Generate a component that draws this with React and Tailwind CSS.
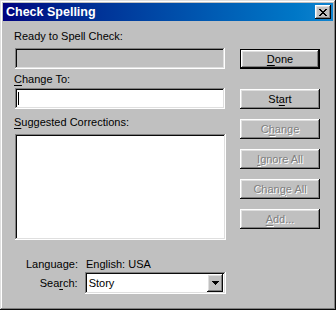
import React from "react";

const raised = "shadow-[inset_-1px_-1px_#0a0a0a,inset_1px_1px_#ffffff,inset_-2px_-2px_#808080,inset_2px_2px_#dfdfdf]";
const sunken = "shadow-[inset_-1px_-1px_#ffffff,inset_1px_1px_#808080,inset_-2px_-2px_#dfdfdf,inset_2px_2px_#0a0a0a]";
const disabledText = "text-[#808080] [text-shadow:1px_1px_0_#ffffff]";

const Btn = ({ children, disabled, isDefault, className = "" }) => {
  const inner = (
    <div className={`flex h-full w-full items-center justify-center bg-[#c0c0c0] ${raised} ${disabled ? disabledText : "text-black"}`}>
      {children}
    </div>
  );
  if (isDefault) {
    return <div className={`h-[20px] w-[80px] border border-black ${className}`}>{inner}</div>;
  }
  return <div className={`h-[20px] w-[80px] ${className}`}>{inner}</div>;
};

const U = ({ children }) => <span className="underline underline-offset-[2px]">{children}</span>;

export default function App() {
  return (
    <div className="h-[310px] w-[336px] bg-[#c0c0c0] p-[3px] text-[11px] leading-[13px] text-black shadow-[inset_-1px_-1px_#0a0a0a,inset_1px_1px_#dfdfdf,inset_-2px_-2px_#808080,inset_2px_2px_#ffffff] [font-family:'Liberation_Sans',Arial,sans-serif]">
      <div className="flex h-[18px] items-center justify-between bg-gradient-to-r from-[#000080] to-[#1084d0] pl-[3px] pr-[2px]">
        <span className="text-[12.5px] font-bold text-white">Check Spelling</span>
        <div className={`flex h-[14px] w-[16px] items-center justify-center bg-[#c0c0c0] ${raised}`}>
          <svg width="8" height="7" viewBox="0 0 8 7" shapeRendering="crispEdges">
            <path d="M0 0h2v1h-2zM6 0h2v1h-2zM1 1h2v1h-2zM5 1h2v1h-2zM2 2h4v1h-4zM3 3h2v1h-2zM2 4h4v1h-4zM1 5h2v1h-2zM5 5h2v1h-2zM0 6h2v1h-2zM6 6h2v1h-2z" fill="#000" />
          </svg>
        </div>
      </div>

      <div className="flex">
        <div className="ml-[11px] flex w-[212px] flex-col">
          <div className="mt-[9px] h-[13px]">Ready to Spell Check:</div>
          <div className={`ml-[1px] mt-[5px] h-[21px] w-[210px] bg-[#c0c0c0] ${sunken}`} />
          <div className="mt-[4px] h-[13px]"><U>C</U>hange To:</div>
          <div className={`ml-[1px] mt-[2px] flex h-[21px] w-[210px] items-center bg-white pl-[3px] ${sunken}`}>
            <div className="h-[13px] w-[1px] bg-black" />
          </div>
          <div className="mt-[7px] h-[13px]"><U>S</U>uggested Corrections:</div>
          <div className={`ml-[1px] mt-[5px] h-[106px] w-[211px] bg-white ${sunken}`} />
          <div className="mt-[18px] flex h-[13px]">
            <div className="w-[64px] text-right">Language:</div>
            <div className="ml-[8px]">English: USA</div>
          </div>
          <div className="mt-[1px] flex h-[22px] items-center">
            <div className="w-[64px] text-right">Sea<U>r</U>ch:</div>
            <div className={`ml-[7px] flex h-[22px] w-[142px] items-center justify-between bg-white pl-[4px] pr-[3px] ${sunken}`}>
              <span>Story</span>
              <div className={`flex h-[18px] w-[16px] items-center justify-center bg-[#c0c0c0] ${raised}`}>
                <svg width="7" height="4" viewBox="0 0 7 4" shapeRendering="crispEdges">
                  <path d="M0 0h7v1h-7zM1 1h5v1h-5zM2 2h3v1h-3zM3 3h1v1h-1z" fill="#000" />
                </svg>
              </div>
            </div>
          </div>
        </div>

        <div className="ml-[14px] flex flex-col">
          <Btn isDefault className="mt-[28px]"><U>D</U>one</Btn>
          <Btn className="mt-[20px]">St<U>a</U>rt</Btn>
          <Btn disabled className="mt-[10px]">C<U>h</U>ange</Btn>
          <Btn disabled className="mt-[10px]"><U>I</U>gnore All</Btn>
          <Btn disabled className="mt-[10px]">Chan<U>g</U>e All</Btn>
          <Btn disabled className="mt-[10px]"><U>A</U>dd...</Btn>
        </div>
      </div>
    </div>
  );
}
